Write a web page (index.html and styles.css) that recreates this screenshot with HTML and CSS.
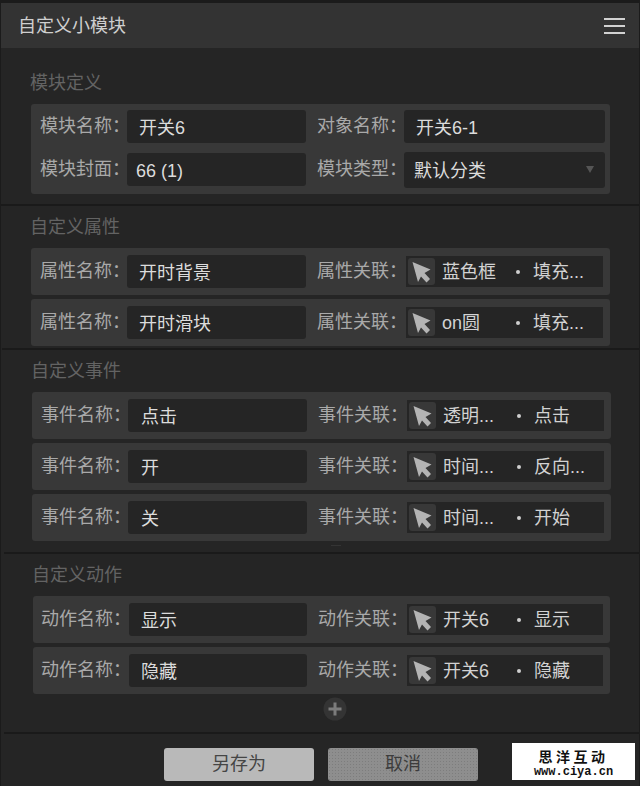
FILE: index.html
```html
<!DOCTYPE html>
<html lang="zh-CN">
<head>
<meta charset="utf-8">
<title>自定义小模块</title>
<link rel="stylesheet" href="styles.css">
</head>
<body>
<svg class="defs" width="0" height="0" aria-hidden="true"><defs><symbol id="cursor" viewBox="0 0 27 27"><path d="M4.500 4 22.500 11.500 16.500 15l5.500 6-3.500 3.500-5.500-6-3 5.500z"/></symbol></defs></svg>
<main class="panel">
  <header class="titlebar">
    <h1 class="titlebar-name">自定义小模块</h1>
    <div class="menu-icon"><span></span><span></span><span></span></div>
  </header>

  <section class="section section-first">
    <h2 class="section-title">模块定义</h2>
    <div class="card">
      <div class="card-line">
        <span class="label">模块名称：</span>
        <span class="field">开关6</span>
        <span class="label label-right">对象名称：</span>
        <span class="field field-wide">开关6-1</span>
      </div>
      <div class="card-line">
        <span class="label">模块封面：</span>
        <span class="field field-tight">66 (1)</span>
        <span class="label label-right">模块类型：</span>
        <span class="field field-wide field-select">默认分类<i class="caret"></i></span>
      </div>
    </div>
  </section>

  <section class="section section-attr">
    <h2 class="section-title">自定义属性</h2>
    <div class="rows">
      <div class="row">
        <span class="label">属性名称：</span><span class="field">开时背景</span>
        <span class="label label-right label-link">属性关联：</span>
        <div class="link"><span class="pick"><svg width="27" height="27"><use href="#cursor"/></svg></span><span class="link-name">蓝色框</span><i class="dot"></i><span class="link-value">填充...</span></div>
      </div>
      <div class="row">
        <span class="label">属性名称：</span><span class="field">开时滑块</span>
        <span class="label label-right label-link">属性关联：</span>
        <div class="link"><span class="pick"><svg width="27" height="27"><use href="#cursor"/></svg></span><span class="link-name">on圆</span><i class="dot"></i><span class="link-value">填充...</span></div>
      </div>
    </div>
  </section>

  <section class="section section-event">
    <h2 class="section-title">自定义事件</h2>
    <div class="rows">
      <div class="row">
        <span class="label">事件名称：</span><span class="field">点击</span>
        <span class="label label-right label-link">事件关联：</span>
        <div class="link"><span class="pick"><svg width="27" height="27"><use href="#cursor"/></svg></span><span class="link-name">透明...</span><i class="dot"></i><span class="link-value">点击</span></div>
      </div>
      <div class="row">
        <span class="label">事件名称：</span><span class="field">开</span>
        <span class="label label-right label-link">事件关联：</span>
        <div class="link"><span class="pick"><svg width="27" height="27"><use href="#cursor"/></svg></span><span class="link-name">时间...</span><i class="dot"></i><span class="link-value">反向...</span></div>
      </div>
      <div class="row">
        <span class="label">事件名称：</span><span class="field">关</span>
        <span class="label label-right label-link">事件关联：</span>
        <div class="link"><span class="pick"><svg width="27" height="27"><use href="#cursor"/></svg></span><span class="link-name">时间...</span><i class="dot"></i><span class="link-value">开始</span></div>
      </div>
    </div>
    <i class="grip"></i>
  </section>

  <section class="section section-action">
    <h2 class="section-title">自定义动作</h2>
    <div class="rows">
      <div class="row">
        <span class="label">动作名称：</span><span class="field">显示</span>
        <span class="label label-right label-link">动作关联：</span>
        <div class="link"><span class="pick"><svg width="27" height="27"><use href="#cursor"/></svg></span><span class="link-name">开关6</span><i class="dot"></i><span class="link-value">显示</span></div>
      </div>
      <div class="row">
        <span class="label">动作名称：</span><span class="field">隐藏</span>
        <span class="label label-right label-link">动作关联：</span>
        <div class="link"><span class="pick"><svg width="27" height="27"><use href="#cursor"/></svg></span><span class="link-name">开关6</span><i class="dot"></i><span class="link-value">隐藏</span></div>
      </div>
    </div>
    <div class="add-line">
      <svg class="add" width="24" height="24" viewBox="0 0 24 24"><circle cx="12" cy="12" r="11.500"/><path d="M12 5.500v13M5.500 12h13"/></svg>
    </div>
  </section>

  <footer class="footer">
    <button class="btn btn-save">另存为</button>
    <button class="btn btn-cancel">取消</button>
  </footer>

  <aside class="watermark">
    <div class="watermark-cn">思洋互动</div>
    <div class="watermark-en">www.ciya.cn</div>
  </aside>
</main>
</body>
</html>
```
FILE: styles.css
```css
* { box-sizing: border-box; }
html, body { margin: 0; padding: 0; }
body {
  width: 640px;
  height: 786px;
  overflow: hidden;
  background: #252525;
  font-family: "Liberation Sans", "Noto Sans CJK SC", sans-serif;
  font-size: 18px;
}
.defs { position: absolute; }
.panel {
  position: relative;
  height: 786px;
  background: #252525;
  border-top: 3px solid #1b1b1b;
  border-left: 1px solid #1b1b1b;
  border-right: 1px solid #1b1b1b;
}

.titlebar {
  height: 45px;
  background: #333333;
  display: flex;
  align-items: center;
  justify-content: space-between;
  padding: 0 14px 0 17px;
}
.titlebar-name {
  margin: 0;
  font-size: 18px;
  font-weight: 400;
  line-height: 24px;
  color: #cfcfcf;
}
.menu-icon { display: flex; flex-direction: column; gap: 5px; width: 21px; }
.menu-icon span { display: block; height: 2px; background: #d2d2d2; }

.section { border-top: 2px solid #1a1a1a; padding-top: 9px; }
.section-first { border-top: 0; padding: 23px 0 10px 30px; }
.section-attr { padding-left: 30px; padding-bottom: 2px; }
.section-event { position: relative; margin-left: 1px; padding-left: 30px; padding-bottom: 11px; }
.section-action { margin-left: 3px; padding-left: 29px; }

.section-title {
  margin: 0 0 11px;
  padding-top: 2px;
  text-indent: -1px;
  font-size: 18px;
  font-weight: 400;
  line-height: 20px;
  color: #636363;
}

.card {
  width: 579px;
  height: 90px;
  padding: 6px 0 0 9px;
  background: #383838;
  border-radius: 3px;
  display: flex;
  flex-direction: column;
  gap: 10px;
}
.card-line { display: flex; align-items: center; height: 33px; }

.rows { display: flex; flex-direction: column; gap: 4px; }
.row {
  width: 579px;
  height: 47px;
  padding-left: 9px;
  background: #383838;
  border-radius: 3px;
  display: flex;
  align-items: center;
}
.section-action .row { width: 577px; padding-left: 8px; }

.label {
  flex: none;
  width: 87px;
  color: #a9a9a9;
  line-height: 24px;
  padding-bottom: 1px;
  white-space: nowrap;
}
.section-action .label { width: 88px; }
.label-right { width: 88px; margin-left: 10px; padding-left: 1px; }
.label-link,
.section-action .label-link { width: 90px; }

.field {
  flex: none;
  width: 179px;
  height: 33px;
  padding: 3px 0 0 12px;
  background: #252525;
  border-radius: 3px;
  color: #dcdcdc;
  line-height: 30px;
  white-space: nowrap;
}
.section-action .field { width: 178px; }
.section-event .field { padding-left: 13px; }
.field-wide { position: relative; width: 201px; }
.field-tight { padding-left: 9px; }
.field-select { height: 36px; margin: -1px 0 -2px; padding-left: 10px; padding-top: 2px; line-height: 34px; }
.caret {
  position: absolute;
  right: 11px;
  top: 14px;
  width: 0;
  height: 0;
  border-left: 4px solid transparent;
  border-right: 4px solid transparent;
  border-top: 7px solid #555555;
}

.link {
  flex: none;
  width: 197px;
  height: 31px;
  padding-left: 2px;
  background: #252525;
  display: flex;
  align-items: center;
  color: #d2d2d2;
  white-space: nowrap;
}
.section-action .link { width: 196px; }
.pick {
  flex: none;
  width: 27px;
  height: 27px;
  background: #383838;
  border-radius: 3px;
  fill: #b4b4b4;
}
.pick svg { display: block; }
.link-name { flex: none; width: 74px; margin-left: 7px; line-height: 24px; }
.dot { flex: none; width: 4px; height: 4px; border-radius: 50%; background: #cfcfcf; }
.link-value { margin-left: 13px; line-height: 24px; }

.grip {
  position: absolute;
  left: 329px;
  bottom: 6px;
  width: 10px;
  height: 1px;
  background: #343434;
}

.add-line { height: 38px; padding: 3px 0 0 290px; }
.add { display: block; }
.add circle { fill: #343434; }
.add path { fill: none; stroke: #7c7c7c; stroke-width: 3; }

.footer {
  margin-left: 3px;
  border-top: 2px solid #1a1a1a;
  padding: 14px 0 0 160px;
  display: flex;
  gap: 14px;
}
.btn {
  width: 150px;
  height: 33px;
  padding: 0;
  border: 0;
  border-radius: 3px;
  font: inherit;
  line-height: 33px;
}
.btn-save { background: #b9b9b9; color: #454545; }
.btn-cancel {
  color: #3c3c3c;
  background-color: #8e8e8e;
  background-image: radial-gradient(#7d7d7d 0.5px, transparent 0.6px);
  background-size: 3px 3px;
}

.watermark {
  position: absolute;
  left: 511px;
  top: 740px;
  width: 123px;
  height: 37px;
  background: #ffffff;
  color: #111111;
  text-align: center;
  font-weight: 700;
}
.watermark-cn {
  margin-top: 6px;
  font-family: "Noto Sans CJK SC", sans-serif;
  font-size: 14px;
  line-height: 15px;
  letter-spacing: 3.500px;
}
.watermark-en {
  margin-top: 3px;
  font-family: "Liberation Mono", monospace;
  font-size: 12px;
  line-height: 10px;
}
```
